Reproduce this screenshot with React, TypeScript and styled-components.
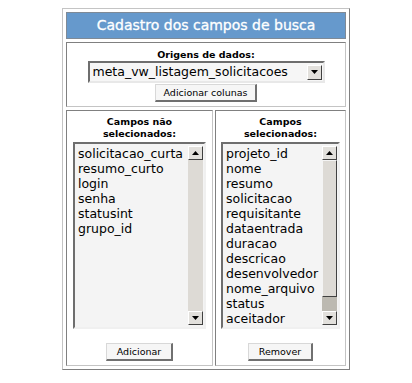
import styled, { createGlobalStyle } from 'styled-components';

const naoSelecionados = ['solicitacao_curta', 'resumo_curto', 'login', 'senha', 'statusint', 'grupo_id'];

const selecionados = [
  'projeto_id',
  'nome',
  'resumo',
  'solicitacao',
  'requisitante',
  'dataentrada',
  'duracao',
  'descricao',
  'desenvolvedor',
  'nome_arquivo',
  'status',
  'aceitador',
];

const Arrow = ({ down }: { down?: boolean }) => (
  <svg width="7" height="4" viewBox="0 0 7 4">
    {down ? <polygon points="0,0 7,0 3.5,4" fill="#000" /> : <polygon points="0,4 7,4 3.5,0" fill="#000" />}
  </svg>
);

const ListBox = ({ items, width, thumb }: { items: string[]; width: number; thumb?: boolean }) => (
  <S.List $w={width}>
    <S.Items>
      {items.map((item) => (
        <S.Item key={item}>{item}</S.Item>
      ))}
    </S.Items>
    <S.ScrollBar>
      <S.ArrowBtn>
        <Arrow />
      </S.ArrowBtn>
      {thumb ? (
        <>
          <S.Thumb />
          <S.Track />
        </>
      ) : (
        <S.Face />
      )}
      <S.ArrowBtn>
        <Arrow down />
      </S.ArrowBtn>
    </S.ScrollBar>
  </S.List>
);

const App = () => {
  return (
    <>
      <GlobalStyle />
      <S.Frame>
        <S.Title>Cadastro dos campos de busca</S.Title>
        <S.SourceCell>
          <S.Label>Origens de dados:</S.Label>
          <S.Select>
            <S.SelectText>meta_vw_listagem_solicitacoes</S.SelectText>
            <S.DropBtn>
              <Arrow down />
            </S.DropBtn>
          </S.Select>
          <S.Button>Adicionar colunas</S.Button>
        </S.SourceCell>
        <S.Columns>
          <S.FieldCell>
            <S.Label>
              Campos não
              <br />
              selecionados:
            </S.Label>
            <ListBox items={naoSelecionados} width={133} />
            <S.BottomButton>Adicionar</S.BottomButton>
          </S.FieldCell>
          <S.FieldCell>
            <S.Label>
              Campos
              <br />
              selecionados:
            </S.Label>
            <ListBox items={selecionados} width={119} thumb />
            <S.BottomButton>Remover</S.BottomButton>
          </S.FieldCell>
        </S.Columns>
      </S.Frame>
    </>
  );
};
export default App;

const GlobalStyle = createGlobalStyle`
  body {
    margin: 8px;
    background: #fff;
    font-family: 'DejaVu Sans', Verdana, sans-serif;
    color: #000;
  }
`;

const S = {
  Frame: styled.div`
    box-sizing: border-box;
    width: 288px;
    margin: 0 auto;
    padding: 3px;
    display: flex;
    flex-direction: column;
    gap: 3px;
    border: 1px solid;
    border-color: #c4c4c4 #808080 #808080 #c4c4c4;
  `,
  Title: styled.div`
    box-sizing: border-box;
    height: 27px;
    background-color: #6699cc;
    border: 1px solid #7f8a96;
    color: #fff;
    font-size: 14px;
    font-weight: 400;
    line-height: 25px;
    text-align: center;
    -webkit-text-stroke: 0.3px #fff;
  `,
  SourceCell: styled.div`
    box-sizing: border-box;
    height: 65px;
    display: flex;
    flex-direction: column;
    align-items: center;
    padding-top: 6px;
    border: 1px solid;
    border-color: #808080 #c4c4c4 #c4c4c4 #808080;
  `,
  Label: styled.div`
    font-size: 9.5px;
    font-weight: 700;
    line-height: 12px;
    text-align: center;
  `,
  Select: styled.div`
    box-sizing: border-box;
    width: 237px;
    height: 22px;
    display: flex;
    align-items: center;
    justify-content: space-between;
    background: #f6f6f6;
    border: 2px solid;
    border-color: #6e6e6e #e8e8e8 #e8e8e8 #6e6e6e;
    padding: 0 1px 0 3px;
  `,
  SelectText: styled.span`
    font-size: 12.5px;
    line-height: 18px;
  `,
  DropBtn: styled.div`
    box-sizing: border-box;
    width: 15px;
    height: 15px;
    display: flex;
    align-items: center;
    justify-content: center;
    background: #e2e0dc;
    border: 1px solid;
    border-color: #fff #404040 #404040 #fff;
  `,
  Button: styled.button`
    box-sizing: border-box;
    height: 18px;
    margin-top: 1px;
    padding: 0 8px;
    font-family: 'DejaVu Sans', Verdana, sans-serif;
    font-size: 9.5px;
    line-height: 14px;
    color: #000;
    background: #f6f6f6;
    border-style: solid;
    border-width: 1px 2px 2px 1px;
    border-color: #d8d8d8 #707070 #707070 #d8d8d8;
  `,
  Columns: styled.div`
    display: grid;
    grid-template-columns: 147px 131px;
    gap: 2px;
    height: 256px;
  `,
  FieldCell: styled.div`
    box-sizing: border-box;
    display: flex;
    flex-direction: column;
    align-items: center;
    padding-top: 5px;
    border: 1px solid;
    border-color: #808080 #c4c4c4 #c4c4c4 #808080;
  `,
  List: styled.div<{ $w: number }>`
    box-sizing: border-box;
    width: ${(p) => p.$w}px;
    height: 187px;
    margin-top: 2px;
    display: flex;
    padding: 2px 1px 2px 2px;
    background: #f4f4f4;
    border: 2px solid;
    border-color: #6e6e6e #f0f0f0 #f0f0f0 #6e6e6e;
  `,
  Items: styled.div`
    flex: 1;
    overflow: hidden;
  `,
  Item: styled.div`
    font-size: 12.5px;
    line-height: 15px;
    padding-left: 1px;
    white-space: nowrap;
  `,
  ScrollBar: styled.div`
    width: 15px;
    display: flex;
    flex-direction: column;
  `,
  ArrowBtn: styled.div`
    box-sizing: border-box;
    height: 14px;
    display: flex;
    align-items: center;
    justify-content: center;
    background: #e2e0dc;
    border: 1px solid;
    border-color: #fff #404040 #404040 #fff;
  `,
  Face: styled.div`
    flex: 1;
    background: #dddad5;
  `,
  Thumb: styled.div`
    box-sizing: border-box;
    flex: 1;
    background: #dddad5;
    border: 1px solid;
    border-color: #f4f4f4 #404040 #404040 #f4f4f4;
  `,
  Track: styled.div`
    height: 14px;
    background: #bcb9b1;
  `,
  BottomButton: styled.button`
    box-sizing: border-box;
    height: 18px;
    margin-top: 14px;
    padding: 0 10px;
    font-family: 'DejaVu Sans', Verdana, sans-serif;
    font-size: 9.5px;
    line-height: 14px;
    color: #000;
    background: #f6f6f6;
    border-style: solid;
    border-width: 1px 2px 2px 1px;
    border-color: #d8d8d8 #707070 #707070 #d8d8d8;
  `,
};
